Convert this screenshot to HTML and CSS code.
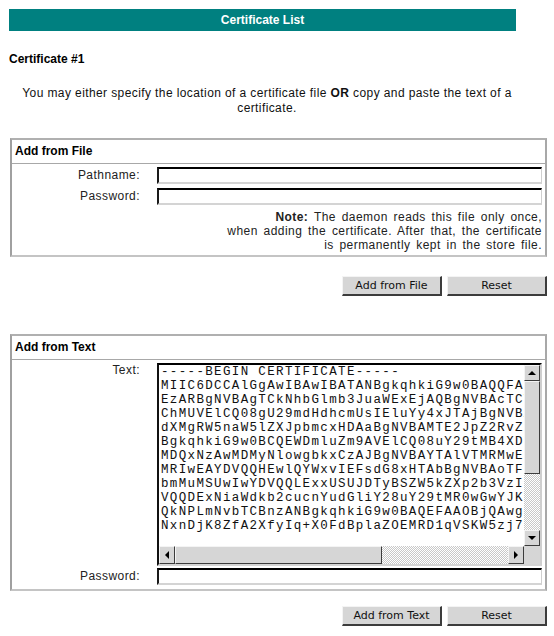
FILE: index.html
```html
<!DOCTYPE html>
<html>
<head>
<meta charset="utf-8">
<link rel="stylesheet" href="styles.css">
</head>
<body>
<div class="page">
  <div class="titlebar">Certificate List</div>
  <div class="cert-title">Certificate #1</div>
  <div class="intro">You may either specify the location of a certificate file <b>OR</b> copy and paste the text of a<br>certificate.</div>

  <div class="box box-file">
    <div class="box-head">Add from File</div>
    <div class="box-body">
      <div class="form-grid">
        <div class="label">Pathname:</div>
        <div class="field"><div class="input"></div></div>
        <div class="label">Password:</div>
        <div class="field"><div class="input"></div></div>
      </div>
      <div class="note"><b>Note:</b> The daemon reads this file only once,<br>when adding the certificate. After that, the certificate<br>is permanently kept in the store file.</div>
    </div>
  </div>
  <div class="buttons buttons-file">
    <div class="btn">Add from File</div>
    <div class="btn">Reset</div>
  </div>

  <div class="box box-text">
    <div class="box-head">Add from Text</div>
    <div class="box-body">
      <div class="form-grid form-grid-text">
        <div class="label label-text">Text:</div>
        <div class="field">
          <div class="textarea">
            <div class="ta-content">-----BEGIN CERTIFICATE-----
MIIC6DCCAlGgAwIBAwIBATANBgkqhkiG9w0BAQQFADCB
EzARBgNVBAgTCkNhbGlmb3JuaWExEjAQBgNVBAcTCVBh
ChMUVElCQ08gU29mdHdhcmUsIEluYy4xJTAjBgNVBAsT
dXMgRW5naW5lZXJpbmcxHDAaBgNVBAMTE2JpZ2RvZy5y
BgkqhkiG9w0BCQEWDmluZm9AVElCQ08uY29tMB4XDTA0
MDQxNzAwMDMyNlowgbkxCzAJBgNVBAYTAlVTMRMwEQYD
MRIwEAYDVQQHEwlQYWxvIEFsdG8xHTAbBgNVBAoTFFRJ
bmMuMSUwIwYDVQQLExxUSUJDTyBSZW5kZXp2b3VzIEVu
VQQDExNiaWdkb2cucnYudGliY28uY29tMR0wGwYJKoZI
QkNPLmNvbTCBnzANBgkqhkiG9w0BAQEFAAOBjQAwgYkC
NxnDjK8ZfA2XfyIq+X0FdBplaZOEMRD1qVSKW5zj7Yc1</div>
            <div class="vscroll">
              <div class="sbtn"><span class="arr arr-up"></span></div>
              <div class="thumb vthumb"></div>
              <div class="track"></div>
              <div class="sbtn"><span class="arr arr-down"></span></div>
            </div>
            <div class="hscroll">
              <div class="sbtn"><span class="arr arr-left"></span></div>
              <div class="thumb hthumb"></div>
              <div class="track"></div>
              <div class="sbtn"><span class="arr arr-right"></span></div>
            </div>
            <div class="corner"></div>
          </div>
        </div>
        <div class="label">Password:</div>
        <div class="field"><div class="input"></div></div>
      </div>
    </div>
  </div>
  <div class="buttons buttons-text">
    <div class="btn">Add from Text</div>
    <div class="btn">Reset</div>
  </div>
</div>
</body>
</html>
```

FILE: styles.css
```css
html, body {
  margin: 0;
  padding: 0;
  background: #fff;
}
body {
  font-family: "Liberation Sans", Arial, sans-serif;
  font-size: 12px;
  color: #000;
}
.page {
  padding: 9px 7px 0 9px;
}
.titlebar {
  width: 507px;
  height: 22px;
  line-height: 22px;
  background: #008080;
  color: #fff;
  font-weight: bold;
  text-align: center;
}
.cert-title {
  margin-top: 21px;
  font-weight: bold;
  line-height: 14px;
}
.intro {
  width: 516px;
  margin-top: 20px;
  text-align: center;
  line-height: 15px;
  letter-spacing: 0.4px;
  color: #111;
}
.box {
  margin-left: 1px;
  width: 533px;
  border: 2px solid #a0a0a0;
  border-top-color: #b0b0b0;
  border-right-color: #a8a8a8;
  border-bottom-color: #c4c4c4;
}
.box-file {
  margin-top: 22px;
}
.box-head {
  height: 23px;
  line-height: 23px;
  padding-left: 3px;
  font-weight: bold;
  border-bottom: 1px solid #a8a8a8;
}
.box-body {
  padding: 3px 3px 4px 0;
}
.box-file .box-body {
  padding-bottom: 3px;
}
.form-grid {
  display: grid;
  grid-template-columns: 128px 1fr;
  column-gap: 17px;
  row-gap: 4px;
}
.form-grid-text {
  row-gap: 2px;
}
.label {
  text-align: right;
  line-height: 17px;
  letter-spacing: 0.45px;
  color: #222;
}
.label-text {
  line-height: 14px;
}
.input {
  height: 13px;
  border-style: solid;
  border-width: 2px 1px 2px 2px;
  border-color: #000 #cfcfcf #d4d4d4 #1a1a1a;
  background: #fff;
}
.note {
  margin-top: 5px;
  text-align: right;
  line-height: 14px;
  letter-spacing: 0.45px;
  word-spacing: 2px;
  color: #222;
}
.buttons {
  display: flex;
  justify-content: flex-end;
  gap: 5px;
  width: 538px;
}
.buttons-file {
  margin-top: 19px;
}
.buttons-text {
  margin-top: 15px;
}
.btn {
  width: 97px;
  height: 17px;
  line-height: 17px;
  text-align: center;
  font-family: "DejaVu Sans", Verdana, sans-serif;
  font-size: 11px;
  background: #d6d6d6;
  border-style: solid;
  border-width: 1px 2px 2px 1px;
  border-color: #f4f4f4 #3c3c3c #3c3c3c #f4f4f4;
  color: #111;
}
.box-text {
  margin-top: 38px;
}
.textarea {
  height: 199px;
  border-style: solid;
  border-width: 2px;
  border-color: #000 #cfcfcf #d4d4d4 #111;
  display: grid;
  grid-template-columns: 1fr 16px;
  grid-template-rows: 1fr 18px;
  background: #fff;
}
.ta-content {
  white-space: pre;
  overflow: hidden;
  font-family: "Liberation Mono", "Courier New", monospace;
  font-size: 12.5px;
  letter-spacing: 1.35px;
  line-height: 14px;
  padding-left: 2px;
  color: #111;
}
.vscroll {
  display: flex;
  flex-direction: column;
}
.hscroll {
  display: flex;
  flex-direction: row;
}
.sbtn {
  flex: 0 0 16px;
  width: 16px;
  height: 16px;
  box-sizing: border-box;
  background: #d6d6d6;
  border-style: solid;
  border-width: 1px;
  border-color: #f4f4f4 #3c3c3c #3c3c3c #f4f4f4;
  display: flex;
  align-items: center;
  justify-content: center;
}
.hscroll .sbtn {
  height: 18px;
}
.thumb {
  box-sizing: border-box;
  background: #d6d6d6;
  border-style: solid;
  border-width: 1px;
  border-color: #f4f4f4 #3c3c3c #3c3c3c #f4f4f4;
}
.vthumb {
  flex: 0 0 93px;
}
.hthumb {
  flex: 0 0 207px;
}
.track {
  flex: 1;
  background: repeating-conic-gradient(#c8c8c8 0 25%, #fff 0 50%) 0 0 / 2px 2px;
}
.corner {
  background: #d6d6d6;
}
.arr {
  width: 0;
  height: 0;
  border-style: solid;
}
.arr-up {
  border-width: 0 4px 4px 4px;
  border-color: transparent transparent #000 transparent;
}
.arr-down {
  border-width: 4px 4px 0 4px;
  border-color: #000 transparent transparent transparent;
}
.arr-left {
  border-width: 4px 4px 4px 0;
  border-color: transparent #000 transparent transparent;
}
.arr-right {
  border-width: 4px 0 4px 4px;
  border-color: transparent transparent transparent #000;
}
```
